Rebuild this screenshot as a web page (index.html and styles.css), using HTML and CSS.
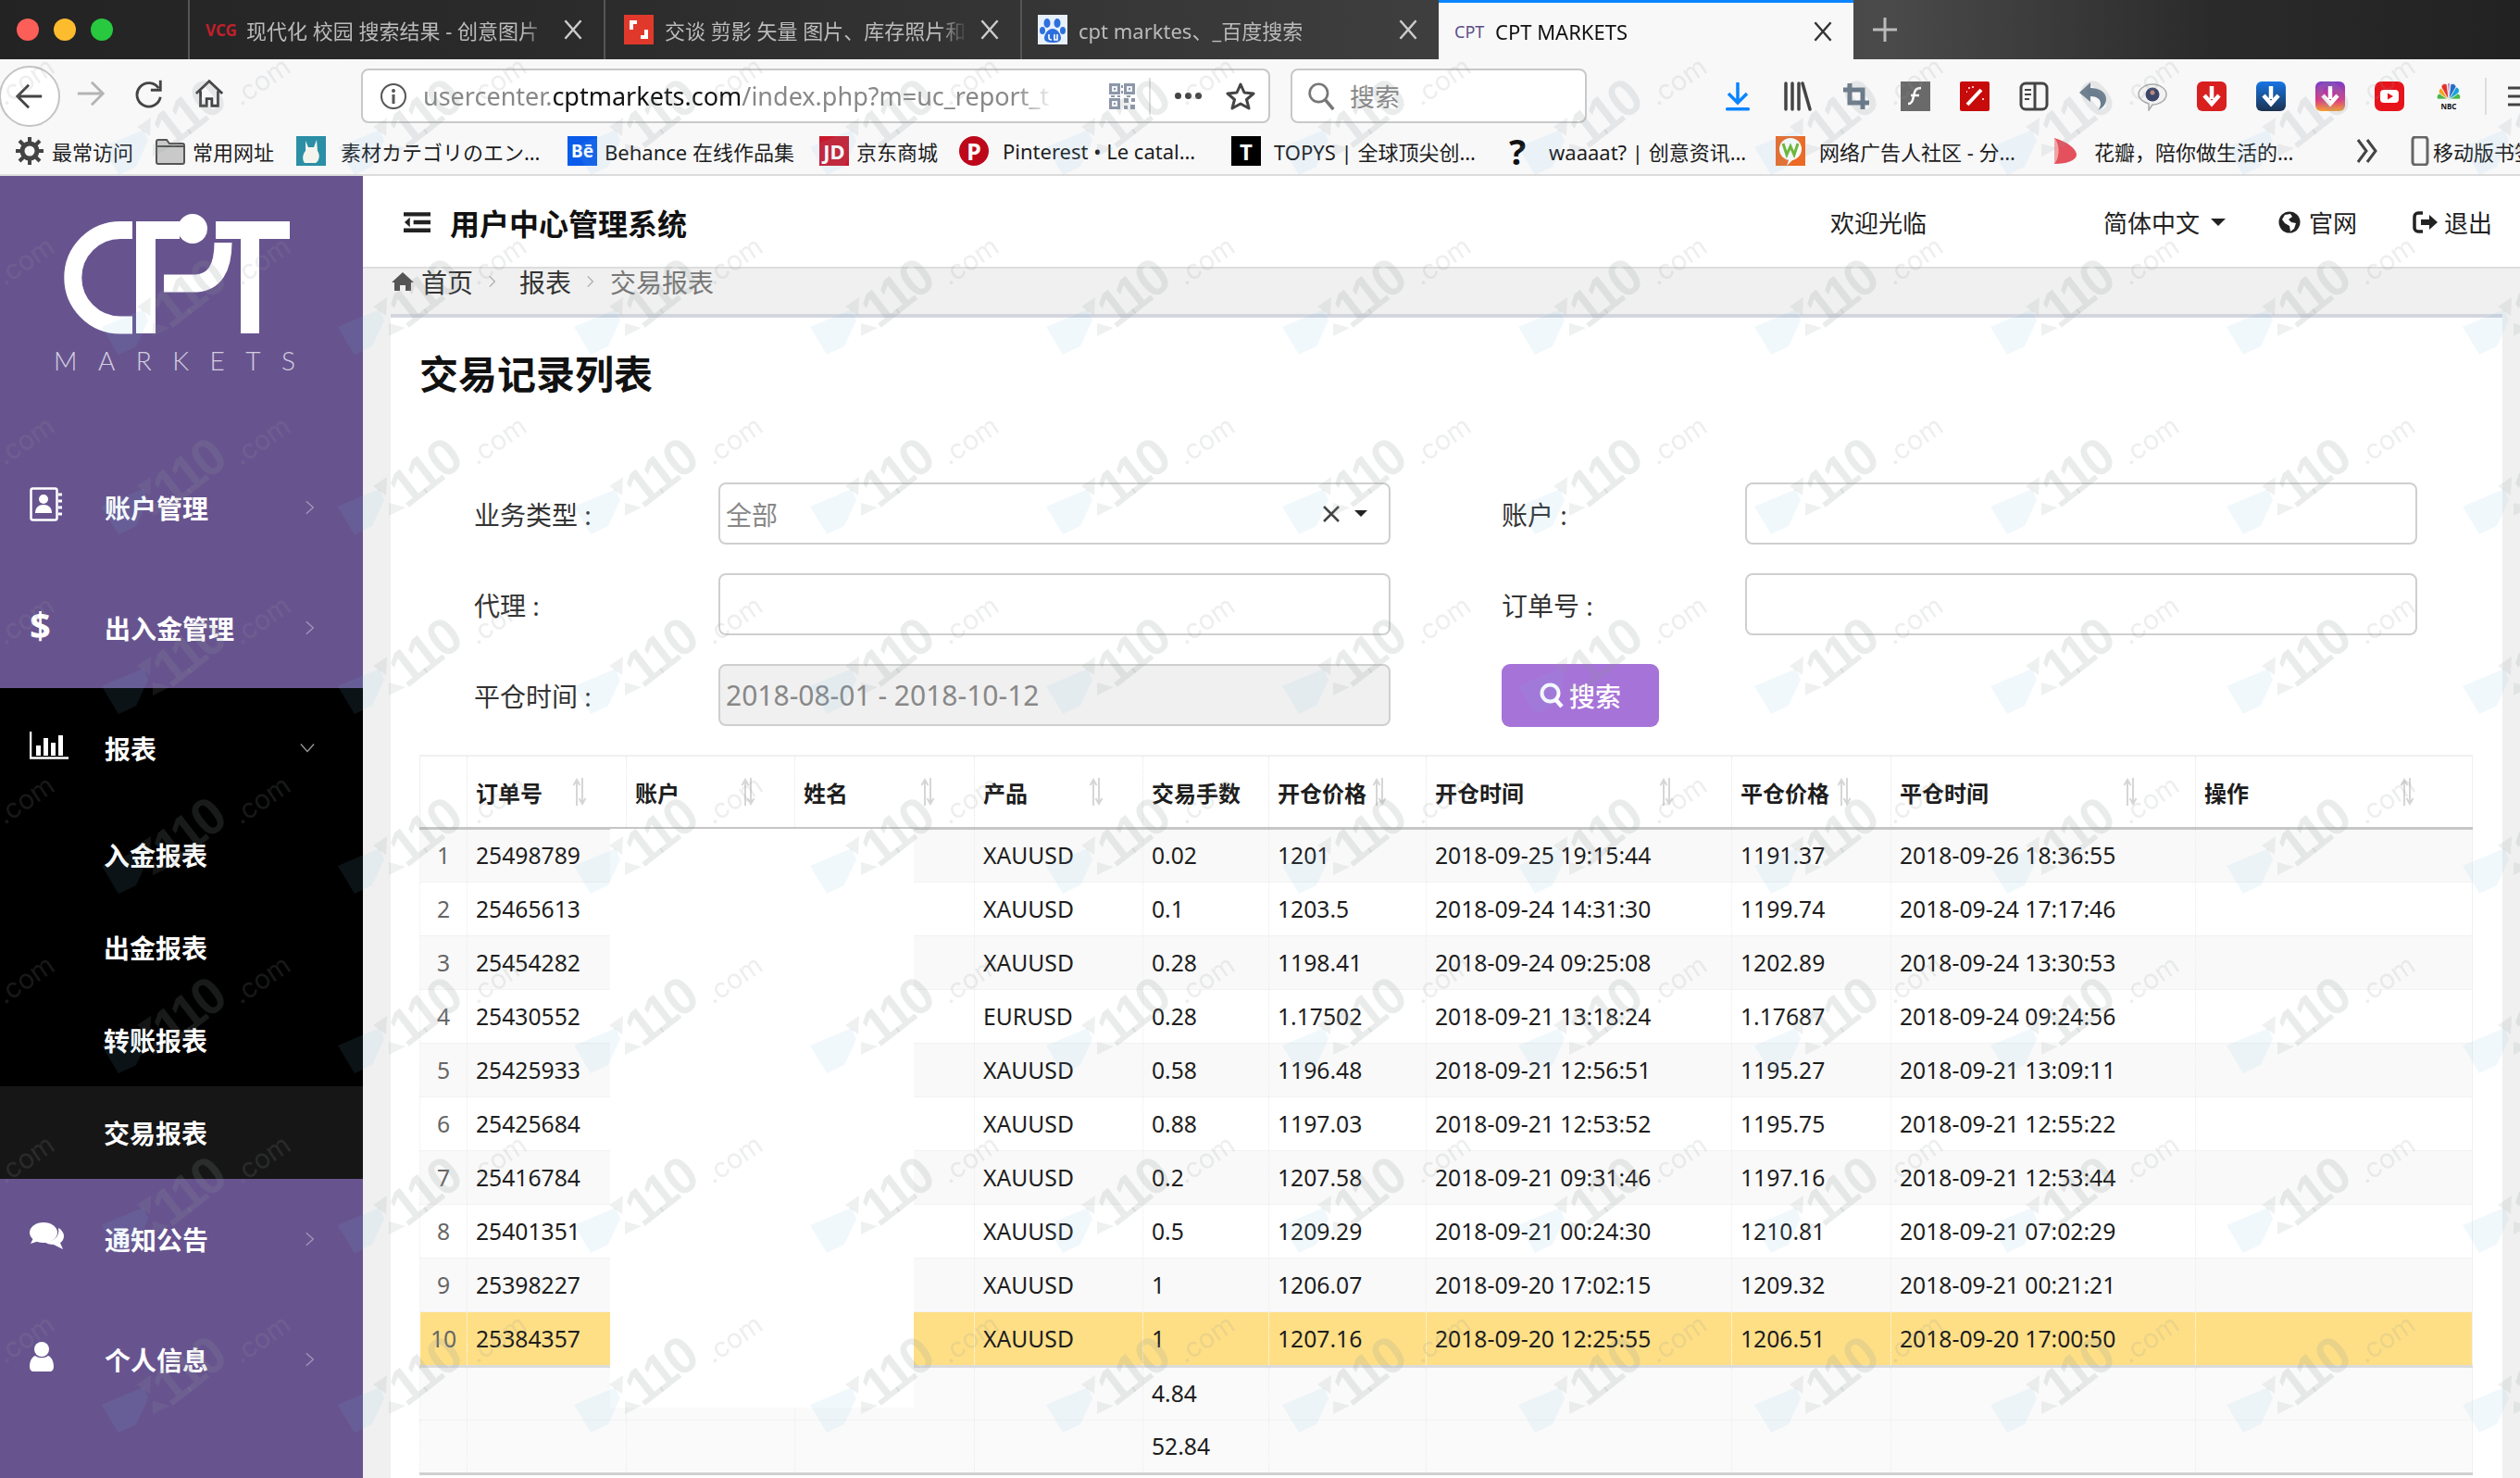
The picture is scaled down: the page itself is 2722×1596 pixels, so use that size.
FILE: index.html
```html
<!DOCTYPE html>
<html lang="zh-CN">
<head>
    <meta charset="UTF-8">
    <title>CPT MARKETS</title>
    <link rel="stylesheet" href="styles.css">
</head>
<body>
    <div class="tabbar">
        <div class="lights"><i class="light red"></i><i class="light yellow"></i><i class="light green"></i></div>
        <div class="tab tab-one">
            <span class="favicon vcg">VCG</span>
            <span class="tab-title">现代化 校园 搜索结果 - 创意图片</span>
            <svg class="tab-close" viewBox="0 0 18 18"><path d="M2 1l14 16M16 1L2 17"/></svg>
        </div>
        <div class="tab">
            <svg class="favicon" viewBox="0 0 32 32"><rect width="32" height="32" fill="#e0392b"/><path d="M8 16V8h6M24 16v8h-6" fill="none" stroke="#fff" stroke-width="4"/></svg>
            <span class="tab-title">交谈 剪影 矢量 图片、库存照片和</span>
            <svg class="tab-close" viewBox="0 0 18 18"><path d="M2 1l14 16M16 1L2 17"/></svg>
        </div>
        <div class="tab tab-three">
            <svg class="favicon" viewBox="0 0 32 32"><rect width="32" height="32" fill="#e8f0fc"/><g fill="#2d6fdc"><ellipse cx="10" cy="9" rx="3.5" ry="5"/><ellipse cx="21" cy="9" rx="3.5" ry="5"/><ellipse cx="5" cy="17" rx="3" ry="4"/><ellipse cx="27" cy="17" rx="3" ry="4"/><path d="M16 15c-5 0-9 6-9 10 0 4 4 5 9 5s9-1 9-5c0-4-4-10-9-10z"/></g><path d="M12 21v4c0 2 2 2 3 2M18 21v6h3v-6" fill="none" stroke="#fff" stroke-width="1.6"/></svg>
            <span class="tab-title">cpt marktes、_百度搜索</span>
            <svg class="tab-close" viewBox="0 0 18 18"><path d="M2 1l14 16M16 1L2 17"/></svg>
        </div>
        <div class="tab tab-active">
            <span class="favicon cpt-mini">CPT</span>
            <span class="tab-title">CPT MARKETS</span>
            <svg class="tab-close" viewBox="0 0 18 18"><path d="M2 1l14 16M16 1L2 17"/></svg>
        </div>
        <svg class="tab-new" viewBox="0 0 28 28"><path d="M14 1v26M1 14h26"/></svg>
    </div>

    <div class="toolbar">
        <div class="back-btn">
            <svg viewBox="0 0 36 36" class="nav-icon"><path d="M32 18H5M17 5L4 18l13 13" stroke="#444"/></svg>
        </div>
        <svg viewBox="0 0 36 36" class="nav-icon forward"><path d="M3 18h27M19 5l13 13-13 13" stroke="#b4b4b4"/></svg>
        <svg viewBox="0 0 36 36" class="nav-icon reload"><path d="M29 12A13.500 13.500 0 1 0 31 22" stroke="#444"/><path d="M31 3v11H20" stroke="#444"/></svg>
        <svg viewBox="0 0 36 36" class="nav-icon home"><path d="M3 18L18 4l15 14M8 15v17h7v-8h6v8h7V15" stroke="#444"/></svg>
        <div class="urlbar">
            <svg class="info-icon" viewBox="0 0 30 30"><circle cx="15" cy="15" r="13" fill="none" stroke="#555" stroke-width="2"/><circle cx="15" cy="9" r="2" fill="#555"/><path d="M15 13v10" stroke="#555" stroke-width="3"/></svg>
            <span class="url-text">usercenter.<b>cptmarkets.com</b>/index.php?m=uc_report_t</span>
            <svg class="qr-icon" viewBox="0 0 30 30"><path d="M1 1h12v12H1zM17 1h12v12H17zM1 17h12v12H1zM17 17h5v5h-5zM24 24h5v5h-5zM17 25h4v4h-4zM25 17h4v4h-4z" fill="#8c97a8"/><path d="M4 4h6v6H4zM20 4h6v6h-6zM4 20h6v6H4z" fill="#f1f2f5"/><path d="M6 6h2v2H6zM22 6h2v2h-2zM6 22h2v2H6zM14 3h2v3h-2zM14 9h2v3h-2zM3 14h4v2H3zM10 14h3v2h-3zM20 14h4v2h-4z" fill="#8c97a8"/></svg>
            <i class="url-sep"></i>
            <span class="url-more"><i></i><i></i><i></i></span>
            <svg class="star-icon" viewBox="0 0 32 32"><path d="M16 3l4 9 10 1-7.500 6.500L25 29l-9-5-9 5 2.500-9.500L2 13l10-1z" fill="none" stroke="#444" stroke-width="3" stroke-linejoin="round"/></svg>
        </div>
        <div class="searchbar">
            <svg class="search-icon" viewBox="0 0 34 36"><circle cx="14" cy="14" r="11" fill="none" stroke="#777" stroke-width="3"/><path d="M22 22l10 12" stroke="#777" stroke-width="4"/></svg>
            <span>搜索</span>
        </div>
        <div class="addons">
            <svg viewBox="0 0 32 32"><path d="M16 1v21M6 13l10 10 10-10" fill="none" stroke="#0a84ff" stroke-width="3.500"/><rect x="3" y="28" width="26" height="3.500" rx="1.500" fill="#0a84ff"/></svg>
            <svg viewBox="0 0 32 32"><path d="M4 2v28M11 2v28M18 2v28M22 2l8 28" fill="none" stroke="#444" stroke-width="3.500" stroke-linecap="round"/></svg>
            <svg viewBox="0 0 32 32"><path d="M9 2v21h21M2 9h21v21" fill="none" stroke="#6b7a8a" stroke-width="5"/></svg>
            <svg viewBox="0 0 32 32"><rect width="32" height="32" fill="#6a6a6a"/><path d="M22 7c-6 0-7 3-8 9-1 5-2 8-6 8M11 15h9" fill="none" stroke="#fff" stroke-width="2.500"/></svg>
            <svg viewBox="0 0 32 32"><rect width="32" height="32" rx="2" fill="#c70a0a"/><path d="M8 25L23 9" stroke="#fff" stroke-width="4"/><path d="M9 7h2M14 5v2M25 18v2M7 11h1" stroke="#fff" stroke-width="1.500"/></svg>
            <svg viewBox="0 0 32 32"><rect x="2" y="2" width="28" height="28" rx="5" fill="none" stroke="#444" stroke-width="3"/><path d="M17 2v28" stroke="#444" stroke-width="3"/><path d="M6 9h7M6 14h7M6 19h5" stroke="#444" stroke-width="2"/></svg>
            <svg viewBox="0 0 32 32"><path d="M13 1L1 12l12 10v-6c7 0 11 3 11 8 0 3-2 6-3 7 5-2 9-7 9-12 0-8-8-12-17-12z" fill="#6b7d8f"/></svg>
            <svg viewBox="0 0 32 32"><path d="M16 3c8 0 15 5 15 11s-7 11-15 11l-4 6v-7C6 22 1 19 1 14 1 8 8 3 16 3z" fill="#f2f2f2" stroke="#aaa" stroke-width="1.500"/><circle cx="16" cy="14" r="7.500" fill="#3d4668"/><circle cx="16" cy="12" r="2.500" fill="#b98a80"/></svg>
            <svg viewBox="0 0 32 32"><rect width="32" height="32" rx="6" fill="#d8201f"/><path d="M16 5v14M8 15l8 9 8-9" fill="none" stroke="#fff" stroke-width="4.500"/></svg>
            <svg viewBox="0 0 32 32"><defs><linearGradient id="bluedl" x1="0" y1="0" x2="0" y2="1"><stop offset="0" stop-color="#1776e6"/><stop offset="1" stop-color="#1b3350"/></linearGradient></defs><rect width="32" height="32" rx="6" fill="url(#bluedl)"/><path d="M16 5v14M8 15l8 9 8-9" fill="none" stroke="#fff" stroke-width="4.500"/></svg>
            <svg viewBox="0 0 32 32"><defs><linearGradient id="instadl" x1="0" y1="0" x2="0" y2="1"><stop offset="0" stop-color="#7a3fc9"/><stop offset=".6" stop-color="#d8358a"/><stop offset="1" stop-color="#f5a030"/></linearGradient></defs><rect width="32" height="32" rx="6" fill="url(#instadl)"/><path d="M16 5v14M8 15l8 9 8-9" fill="none" stroke="#fff" stroke-width="4.500"/></svg>
            <svg viewBox="0 0 32 32"><rect width="32" height="32" rx="7" fill="#e8141c"/><rect x="6" y="9" width="20" height="14" rx="4" fill="#fff"/><path d="M14 12.500v7l6-3.500z" fill="#e8141c"/></svg>
            <svg viewBox="0 0 32 32"><g stroke="#fff" stroke-width=".6"><path d="M16 20L6 13a4 4 0 0 1 2-6z" fill="#f6a21e"/><path d="M16 20L8 6a4 4 0 0 1 6-3z" fill="#e2322b"/><path d="M16 20l-1-18a2 2 0 0 1 2 0z" fill="#8f3d98"/><path d="M16 20l2-17a4 4 0 0 1 6 3z" fill="#2b6cc4"/><path d="M16 20l8-14a4 4 0 0 1 2 7z" fill="#1aa0d8"/><path d="M16 20L26 13a4 4 0 0 1 2 6H4a4 4 0 0 1 2-6z" fill="#4ab84a"/></g><rect x="6" y="21" width="20" height="10" fill="#f8f8f9"/><text x="16" y="30" class="nbc">NBC</text></svg>
            <i class="addon-sep"></i>
            <svg class="addon-menu" viewBox="0 0 20 32"><path d="M4 7h16M4 16h16M4 25h16" stroke="#444" stroke-width="3"/></svg>
        </div>
    </div>

    <div class="bookmarks">
        <a class="bm"><svg class="bm-icon" viewBox="0 0 32 32"><circle cx="16" cy="16" r="8" fill="none" stroke="#444" stroke-width="5"/><path d="M16 1v6M16 25v6M1 16h6M25 16h6M5 5l5 5M22 22l5 5M27 5l-5 5M10 22l-5 5" stroke="#444" stroke-width="4"/></svg>最常访问</a>
        <a class="bm"><svg class="bm-icon" viewBox="0 0 32 32"><path d="M1 6a2 2 0 0 1 2-2h9l3 4h14a2 2 0 0 1 2 2v18a2 2 0 0 1-2 2H3a2 2 0 0 1-2-2z" fill="#c9c9c9" stroke="#555" stroke-width="2"/><path d="M1 11h30" stroke="#555" stroke-width="2"/></svg>常用网址</a>
        <a class="bm"><svg class="bm-icon" viewBox="0 0 32 32"><rect width="32" height="32" fill="#2b8fa6"/><path d="M10 5l3 7h6l3-8 1 12c3 4 2 11-2 13H9c-3-4-2-10 1-13z" fill="#f4f4ee"/></svg>素材カテゴリのエン…</a>
        <a class="bm"><span class="bm-icon logo-be">Bē</span>Behance 在线作品集</a>
        <a class="bm"><span class="bm-icon logo-jd">JD</span>京东商城</a>
        <a class="bm"><span class="bm-icon logo-pin">P</span>Pinterest • Le catal…</a>
        <a class="bm"><span class="bm-icon logo-topys">T</span>TOPYS | 全球顶尖创…</a>
        <a class="bm"><span class="bm-icon logo-what">?</span>waaaat? | 创意资讯…</a>
        <a class="bm"><svg class="bm-icon" viewBox="0 0 32 32"><rect width="32" height="32" fill="#ec6a25"/><circle cx="16" cy="14" r="12" fill="#fff"/><path d="M12 32l3-9h6z" fill="#fff"/><path d="M8 8l4 12 4-9 4 9 4-12" fill="none" stroke="#6db72b" stroke-width="3"/></svg>网络广告人社区 - 分…</a>
        <a class="bm"><svg class="bm-icon" viewBox="0 0 32 32"><path d="M3 2c14 4 24 12 24 18 0 6-10 10-24 10z" fill="#e4505c"/><path d="M3 2c5 4 7 20 0 28z" fill="#f1a5a8"/></svg>花瓣，陪你做生活的…</a>
        <svg class="bm-more" viewBox="0 0 26 30"><path d="M3 3l9 12-9 12M13 3l9 12-9 12" fill="none" stroke="#444" stroke-width="3"/></svg>
        <a class="bm bm-mobile"><svg class="bm-icon" viewBox="0 0 20 32"><rect x="2" y="1" width="16" height="30" rx="3" fill="none" stroke="#666" stroke-width="3"/></svg>移动版书签</a>
    </div>

    <div class="app">
        <aside class="sidebar">
            <div class="logo">
                <svg viewBox="0 0 392 293" width="392" height="293">
                    <path d="M143 58.500H130A51 51 0 0 0 130 161H143" fill="none" stroke="#fff" stroke-width="19"/>
                    <path d="M147 49h47v19h-26v102h-21z" fill="#fff"/>
                    <circle cx="208" cy="57" r="16" fill="#fff"/>
                    <path d="M177 116H212Q241 114 241 72" fill="none" stroke="#fff" stroke-width="19"/>
                    <path d="M233 49h80v19h-33v102h-20V68h-27z" fill="#fff"/>
                    <text x="58" y="210" class="logo-word">MARKETS</text>
                </svg>
            </div>
            <nav>
                <a class="menu-item">
                    <span class="menu-icon"><svg width="36" height="38" viewBox="0 0 36 38"><rect x="1.500" y="1.500" width="28" height="34" rx="2" fill="none" stroke="#fff" stroke-width="2.500"/><circle cx="15" cy="13" r="5" fill="#fff"/><path d="M6 28c0-6 4-9 9-9s9 3 9 9z" fill="#fff"/><path d="M31 8h4M31 15h4M31 22h4M31 29h4" stroke="#fff" stroke-width="3"/></svg></span>
                    账户管理
                    <svg class="chev" viewBox="0 0 12 18"><path d="M1 1l9 8-9 8"/></svg>
                </a>
                <a class="menu-item">
                    <span class="menu-icon dollar">$</span>
                    出入金管理
                    <svg class="chev" viewBox="0 0 12 18"><path d="M1 1l9 8-9 8"/></svg>
                </a>
                <a class="menu-item menu-open">
                    <span class="menu-icon"><svg width="42" height="30" viewBox="0 0 42 30"><path d="M1 0v28.500h41" fill="none" stroke="#fff" stroke-width="2.500"/><path d="M7 15h5v11H7zM15 7h5v19h-5zM23 12h5v14h-5zM31 4h5v22h-5z" fill="#fff"/></svg></span>
                    报表
                    <svg class="chev chev-down" viewBox="0 0 18 12"><path d="M1 1l8 9 8-9"/></svg>
                </a>
                <a class="sub-item">入金报表</a>
                <a class="sub-item">出金报表</a>
                <a class="sub-item">转账报表</a>
                <a class="sub-item sub-active">交易报表</a>
                <a class="menu-item">
                    <span class="menu-icon"><svg width="38" height="30" viewBox="0 0 38 30"><ellipse cx="15" cy="11" rx="15" ry="11" fill="#fff"/><path d="M4 17l-3 6 9-3z" fill="#fff"/><path d="M31 6c4 2 6 6 6 9 0 3-2 6-4 7l3 7-10-5c-4 0-8-1-10-3 9 0 17-5 15-15z" fill="#fff"/></svg></span>
                    通知公告
                    <svg class="chev" viewBox="0 0 12 18"><path d="M1 1l9 8-9 8"/></svg>
                </a>
                <a class="menu-item">
                    <span class="menu-icon"><svg width="26" height="32" viewBox="0 0 26 32"><circle cx="13" cy="8" r="8" fill="#fff"/><path d="M0 27c0-7 3-11 6-12 4 3 10 3 14 0 3 1 6 5 6 12 0 3-2 5-4 5H4c-2 0-4-2-4-5z" fill="#fff"/></svg></span>
                    个人信息
                    <svg class="chev" viewBox="0 0 12 18"><path d="M1 1l9 8-9 8"/></svg>
                </a>
            </nav>
        </aside>

        <main class="main">
            <header class="topbar">
                <svg class="toggle" viewBox="0 0 30 22"><path d="M0 2h30M11 11h19M0 20h30" stroke="#222" stroke-width="4.500"/><path d="M7 5.500v11l-6-5.500z" fill="#222"/></svg>
                <h1 class="app-title">用户中心管理系统</h1>
                <span class="welcome">欢迎光临</span>
                <span class="top-link lang">简体中文<i class="caret"></i></span>
                <span class="top-link site"><svg viewBox="0 0 24 24"><circle cx="12" cy="12" r="11.500" fill="#222"/><path d="M7 4l6-1 2 3-4 3 3 3 5 1-2 6-4 3-1-6-5-3-3-4z" fill="#fff"/></svg>官网</span>
                <span class="top-link logout"><svg viewBox="0 0 28 24"><path d="M11 2H6a4 4 0 0 0-4 4v12a4 4 0 0 0 4 4h5" fill="none" stroke="#222" stroke-width="3.500"/><path d="M9 9h9V4l9 8-9 8v-5H9z" fill="#222"/></svg>退出</span>
            </header>
            <div class="crumbs">
                <svg class="crumb-home" viewBox="0 0 24 20"><path d="M12 0l12 11h-3v9h-6v-6H9v6H3v-9H0z" fill="#555"/></svg>
                <span class="crumb">首页</span>
                <svg class="crumb-sep crumb-sep-first" viewBox="0 0 10 16"><path d="M1 1l7 7-7 7"/></svg>
                <span class="crumb">报表</span>
                <svg class="crumb-sep" viewBox="0 0 10 16"><path d="M1 1l7 7-7 7"/></svg>
                <span class="crumb crumb-now">交易报表</span>
            </div>

            <section class="panel">
                <h2 class="panel-title">交易记录列表</h2>
                <form class="filter">
                    <label>业务类型 :</label>
                    <div class="field">
                        全部
                        <svg class="field-clear" viewBox="0 0 20 20"><path d="M2 2l16 16M18 2L2 18"/></svg>
                        <i class="caret"></i>
                    </div>
                    <label>账户 :</label>
                    <div class="field"></div>

                    <label>代理 :</label>
                    <div class="field"></div>
                    <label>订单号 :</label>
                    <div class="field"></div>

                    <label>平仓时间 :</label>
                    <div class="field field-off">2018-08-01 - 2018-10-12</div>
                    <button class="btn-search" type="button">
                        <svg viewBox="0 0 26 28"><circle cx="11.500" cy="11.500" r="9" fill="none" stroke="#fff" stroke-width="4"/><path d="M17 18l7 8" stroke="#fff" stroke-width="4.500"/></svg>
                        搜索
                    </button>
                </form>

                <div class="table-wrap">
                    <table class="data-table">
                        <colgroup>
                            <col class="c-no"><col class="c-order"><col class="c-acc"><col class="c-name"><col class="c-prod"><col class="c-lots"><col class="c-open"><col class="c-otime"><col class="c-close"><col class="c-ctime"><col class="c-op">
                        </colgroup>
                        <thead>
                            <tr>
                                <th></th>
                                <th><div class="th-in">订单号<svg class="sort" viewBox="0 0 16 30"><path d="M5 30V3M1.500 8L5 2l3.500 6M11 0v27M7.500 22l3.500 6 3.500-6"/></svg></div></th>
                                <th><div class="th-in">账户<svg class="sort" viewBox="0 0 16 30"><path d="M5 30V3M1.500 8L5 2l3.500 6M11 0v27M7.500 22l3.500 6 3.500-6"/></svg></div></th>
                                <th><div class="th-in">姓名<svg class="sort" viewBox="0 0 16 30"><path d="M5 30V3M1.500 8L5 2l3.500 6M11 0v27M7.500 22l3.500 6 3.500-6"/></svg></div></th>
                                <th><div class="th-in">产品<svg class="sort" viewBox="0 0 16 30"><path d="M5 30V3M1.500 8L5 2l3.500 6M11 0v27M7.500 22l3.500 6 3.500-6"/></svg></div></th>
                                <th><div class="th-in">交易手数</div></th>
                                <th><div class="th-in">开仓价格<svg class="sort" viewBox="0 0 16 30"><path d="M5 30V3M1.500 8L5 2l3.500 6M11 0v27M7.500 22l3.500 6 3.500-6"/></svg></div></th>
                                <th class="th-wide"><div class="th-in">开仓时间<svg class="sort" viewBox="0 0 16 30"><path d="M5 30V3M1.500 8L5 2l3.500 6M11 0v27M7.500 22l3.500 6 3.500-6"/></svg></div></th>
                                <th><div class="th-in">平仓价格<svg class="sort" viewBox="0 0 16 30"><path d="M5 30V3M1.500 8L5 2l3.500 6M11 0v27M7.500 22l3.500 6 3.500-6"/></svg></div></th>
                                <th class="th-wide"><div class="th-in">平仓时间<svg class="sort" viewBox="0 0 16 30"><path d="M5 30V3M1.500 8L5 2l3.500 6M11 0v27M7.500 22l3.500 6 3.500-6"/></svg></div></th>
                                <th class="th-wide"><div class="th-in">操作<svg class="sort" viewBox="0 0 16 30"><path d="M5 30V3M1.500 8L5 2l3.500 6M11 0v27M7.500 22l3.500 6 3.500-6"/></svg></div></th>
                            </tr>
                        </thead>
                        <tbody>
                            <tr><td class="idx">1</td><td>25498789</td><td></td><td></td><td>XAUUSD</td><td>0.02</td><td>1201</td><td>2018-09-25 19:15:44</td><td>1191.37</td><td>2018-09-26 18:36:55</td><td></td></tr>
                            <tr><td class="idx">2</td><td>25465613</td><td></td><td></td><td>XAUUSD</td><td>0.1</td><td>1203.5</td><td>2018-09-24 14:31:30</td><td>1199.74</td><td>2018-09-24 17:17:46</td><td></td></tr>
                            <tr><td class="idx">3</td><td>25454282</td><td></td><td></td><td>XAUUSD</td><td>0.28</td><td>1198.41</td><td>2018-09-24 09:25:08</td><td>1202.89</td><td>2018-09-24 13:30:53</td><td></td></tr>
                            <tr><td class="idx">4</td><td>25430552</td><td></td><td></td><td>EURUSD</td><td>0.28</td><td>1.17502</td><td>2018-09-21 13:18:24</td><td>1.17687</td><td>2018-09-24 09:24:56</td><td></td></tr>
                            <tr><td class="idx">5</td><td>25425933</td><td></td><td></td><td>XAUUSD</td><td>0.58</td><td>1196.48</td><td>2018-09-21 12:56:51</td><td>1195.27</td><td>2018-09-21 13:09:11</td><td></td></tr>
                            <tr><td class="idx">6</td><td>25425684</td><td></td><td></td><td>XAUUSD</td><td>0.88</td><td>1197.03</td><td>2018-09-21 12:53:52</td><td>1195.75</td><td>2018-09-21 12:55:22</td><td></td></tr>
                            <tr><td class="idx">7</td><td>25416784</td><td></td><td></td><td>XAUUSD</td><td>0.2</td><td>1207.58</td><td>2018-09-21 09:31:46</td><td>1197.16</td><td>2018-09-21 12:53:44</td><td></td></tr>
                            <tr><td class="idx">8</td><td>25401351</td><td></td><td></td><td>XAUUSD</td><td>0.5</td><td>1209.29</td><td>2018-09-21 00:24:30</td><td>1210.81</td><td>2018-09-21 07:02:29</td><td></td></tr>
                            <tr><td class="idx">9</td><td>25398227</td><td></td><td></td><td>XAUUSD</td><td>1</td><td>1206.07</td><td>2018-09-20 17:02:15</td><td>1209.32</td><td>2018-09-21 00:21:21</td><td></td></tr>
                            <tr class="row-hit"><td class="idx">10</td><td>25384357</td><td></td><td></td><td>XAUUSD</td><td>1</td><td>1207.16</td><td>2018-09-20 12:25:55</td><td>1206.51</td><td>2018-09-20 17:00:50</td><td></td></tr>
                        </tbody>
                        <tfoot>
                            <tr><td></td><td></td><td></td><td></td><td></td><td>4.84</td><td></td><td></td><td></td><td></td><td></td></tr>
                            <tr><td></td><td></td><td></td><td></td><td></td><td>52.84</td><td></td><td></td><td></td><td></td><td></td></tr>
                        </tfoot>
                    </table>
                    <div class="blank-out"></div>
                </div>
            </section>
        </main>
    </div>

    <!-- site watermark, repeated over everything under the tabs -->
    <svg class="watermark" width="2722" height="1596">
        <defs>
            <pattern id="wm" patternUnits="userSpaceOnUse" x="100" y="62" width="255" height="194">
                <path d="M10 97L55 78 60 90 47 118 28 127z" fill="#78bee6" fill-opacity=".1"/>
                <path d="M48 75L63 65 62 85zM65 93L83 98 65 107z" fill="#8c9696" fill-opacity=".14"/>
                <text transform="translate(84 100) rotate(-38)" class="wm-num">110</text>
                <text transform="translate(160 53) rotate(-34)" class="wm-dom">.com</text>
            </pattern>
        </defs>
        <rect y="64" width="2722" height="1532" fill="url(#wm)"/>
    </svg>
</body>
</html>
```

FILE: styles.css
```css
* {
    box-sizing: border-box;
}
html, body {
    margin: 0;
    padding: 0;
}
body {
    position: relative;
    width: 2722px;
    height: 1596px;
    overflow: hidden;
    background-color: #f8f8f9;
    color: #222;
    font-family: "Noto Sans", "Noto Sans CJK SC", sans-serif;
}
svg {
    display: block;
    flex: none;
}

/* browser tabs */
.tabbar {
    display: flex;
    align-items: stretch;
    height: 64px;
    background: linear-gradient(90deg, #232323 0, #2c2c2c 25%, #3a3a3a 50%, #4a4a4a 75%, #2a2a2a 88%, #222 100%);
}
.lights {
    display: flex;
    align-items: center;
    gap: 16px;
    width: 203px;
    padding-left: 18px;
}
.light {
    width: 24px;
    height: 24px;
    border-radius: 50%;
}
.red { background-color: #fc5f57; }
.yellow { background-color: #fdbc2e; }
.green { background-color: #28c83f; }
.tab {
    display: flex;
    align-items: center;
    width: 450px;
    padding: 0 22px 0 20px;
    border-left: 2px solid #555;
    font-size: 22px;
    color: #bbb;
}
.tab-one { width: 449px; padding-left: 17px; }
.tab-three { width: 452px; padding-left: 17px; }
.tab-active {
    width: 448px;
    padding-left: 17px;
    border-left: 0;
    border-top: 3px solid #0a84ff;
    background-color: #f8f8f9;
    color: #111;
}
.favicon {
    width: 32px;
    height: 32px;
    flex: none;
}
.vcg {
    display: flex;
    align-items: center;
    width: 32px;
    font-size: 17px;
    font-weight: 700;
    color: #c0202c;
    white-space: nowrap;
}
.cpt-mini {
    display: flex;
    align-items: center;
    font-size: 18px;
    color: #5d4e86;
}
.tab-title {
    flex: 1;
    margin-left: 12px;
    overflow: hidden;
    white-space: nowrap;
    -webkit-mask-image: linear-gradient(90deg, #000 90%, transparent 100%);
    mask-image: linear-gradient(90deg, #000 90%, transparent 100%);
}
.tab-close {
    width: 22px;
    height: 22px;
    margin-left: 12px;
    stroke: #ccc;
    stroke-width: 2;
}
.tab-active .tab-close { stroke: #333; }
.tab-new {
    width: 28px;
    height: 28px;
    margin: 18px 0 0 20px;
    stroke: #bbb;
    stroke-width: 3;
}

/* browser toolbar */
.toolbar {
    display: flex;
    align-items: center;
    height: 74px;
    background-color: #f8f8f9;
}
.back-btn {
    display: flex;
    align-items: center;
    justify-content: center;
    flex: none;
    width: 66px;
    height: 66px;
    margin: 6px 0 0 -1px;
    border: 2px solid #c4c4c4;
    border-radius: 50%;
    background-color: #fff;
}
.nav-icon {
    width: 34px;
    height: 34px;
    fill: none;
    stroke-width: 3;
}
.forward { margin-left: 16px; }
.reload { margin-left: 29px; }
.home { margin-left: 31px; }
.urlbar {
    display: flex;
    align-items: center;
    flex: none;
    width: 982px;
    height: 59px;
    margin: 5px 0 0 147px;
    padding: 0 14px 0 18px;
    border: 2px solid #c8c8c8;
    border-radius: 8px;
    background-color: #fff;
}
.info-icon {
    width: 30px;
    height: 30px;
}
.url-text {
    width: 700px;
    margin-left: 17px;
    overflow: hidden;
    white-space: nowrap;
    font-size: 27px;
    color: #888;
    -webkit-mask-image: linear-gradient(90deg, #000 94%, transparent 100%);
    mask-image: linear-gradient(90deg, #000 94%, transparent 100%);
}
.url-text b {
    font-weight: 400;
    color: #111;
}
.qr-icon {
    width: 30px;
    height: 30px;
    margin-left: 58px;
}
.url-sep {
    width: 2px;
    height: 40px;
    margin-left: 14px;
    background-color: #ddd;
}
.url-more {
    display: flex;
    gap: 4px;
    margin-left: 26px;
}
.url-more i {
    width: 7px;
    height: 7px;
    border-radius: 50%;
    background-color: #444;
}
.star-icon {
    width: 32px;
    height: 32px;
    margin-left: 26px;
}
.searchbar {
    display: flex;
    align-items: center;
    flex: none;
    width: 320px;
    height: 59px;
    margin: 5px 0 0 22px;
    padding-left: 16px;
    border: 2px solid #c8c8c8;
    border-radius: 8px;
    background-color: #fff;
    font-size: 27px;
    color: #888;
}
.search-icon {
    width: 30px;
    height: 34px;
    margin-right: 16px;
}
.addons {
    display: flex;
    align-items: center;
    flex: none;
    gap: 32px;
    margin: 5px 0 0 147px;
}
.addons svg {
    width: 32px;
    height: 32px;
}
.nbc {
    font-size: 8px;
    font-weight: 700;
    text-anchor: middle;
    fill: #111;
}
.addon-sep {
    flex: none;
    width: 2px;
    height: 40px;
    margin-left: -9px;
    background-color: #ddd;
}
.addons .addon-menu {
    width: 20px;
    margin-left: -13px;
}

/* bookmarks */
.bookmarks {
    display: flex;
    align-items: center;
    height: 52px;
    padding-left: 16px;
    background-color: #f8f8f9;
    border-bottom: 2px solid #dcdcdc;
    white-space: nowrap;
}
.bm {
    display: flex;
    align-items: center;
    flex: none;
    gap: 8px;
    width: 152px;
    font-size: 22px;
    color: #1c1c1c;
}
.bm:nth-child(3) { width: 293px; gap: 16px; }
.bm:nth-child(4) { width: 272px; }
.bm:nth-child(5) { width: 151px; }
.bm:nth-child(6) { width: 294px; gap: 15px; }
.bm:nth-child(7) { width: 293px; gap: 14px; }
.bm:nth-child(8) { width: 295px; gap: 18px; }
.bm:nth-child(9) { width: 298px; gap: 15px; }
.bm:nth-child(10) { width: 328px; gap: 14px; }
.bm-icon {
    display: flex;
    align-items: center;
    justify-content: center;
    flex: none;
    width: 32px;
    height: 32px;
}
.logo-be {
    background-color: #0a5bea;
    font-size: 19px;
    font-weight: 700;
    color: #fff;
}
.logo-jd {
    background-color: #c9182c;
    font-size: 22px;
    font-weight: 700;
    color: #fff;
}
.logo-pin {
    border-radius: 50%;
    background-color: #bd081c;
    font-size: 25px;
    font-weight: 700;
    color: #fff;
}
.logo-topys {
    background-color: #000;
    font-size: 24px;
    font-weight: 700;
    color: #fff;
}
.logo-what {
    font-size: 38px;
    font-weight: 700;
    color: #111;
}
.bm-more {
    width: 26px;
    height: 30px;
    margin-right: 34px;
}
.bm-mobile .bm-icon { width: 20px; }
.bm-mobile { gap: 4px; }

/* app layout */
.app {
    display: flex;
    height: 1406px;
}
.sidebar {
    flex: none;
    width: 392px;
    background-color: #67548f;
    color: #fff;
}
.logo {
    height: 293px;
}
.logo-word {
    font-family: "Lato", "Noto Sans", sans-serif;
    font-size: 28px;
    font-weight: 300;
    letter-spacing: 22.500px;
    fill: rgba(255, 255, 255, .72);
}
.menu-item {
    display: flex;
    align-items: center;
    height: 130px;
    padding: 0 52px 0 32px;
    font-size: 28px;
    font-weight: 700;
}
.menu-open {
    background-color: #000;
}
.menu-icon {
    display: flex;
    flex: none;
    align-items: center;
    width: 81px;
    margin-top: -6px;
}
.dollar {
    font-size: 40px;
    font-weight: 700;
    line-height: 40px;
}
.chev {
    width: 10px;
    height: 18px;
    margin-left: auto;
    fill: none;
    stroke: rgba(255, 255, 255, .4);
    stroke-width: 1.5;
}
.chev-down {
    width: 16px;
    height: 12px;
    stroke: rgba(255, 255, 255, .6);
}
.sub-item {
    display: flex;
    align-items: center;
    height: 100px;
    padding-left: 112px;
    background-color: #000;
    font-size: 28px;
    font-weight: 700;
}
.sub-active {
    background-color: #161616;
}

/* top bar */
.main {
    flex: 1;
    min-width: 0;
    background-color: #f0f0f0;
}
.topbar {
    display: flex;
    align-items: center;
    height: 100px;
    padding: 2px 0 0 44px;
    background-color: #fff;
    border-bottom: 2px solid #ddd;
}
.toggle {
    width: 29px;
    height: 22px;
}
.app-title {
    margin: 0 0 0 21px;
    font-size: 32px;
    font-weight: 700;
    color: #111;
}
.welcome {
    margin-left: auto;
    font-size: 26px;
}
.top-link {
    display: flex;
    align-items: center;
    font-size: 26px;
}
.lang { margin-left: 191px; }
.site { margin-left: 57px; }
.logout { margin: 0 30px 0 60px; }
.site svg {
    width: 24px;
    height: 24px;
    margin-right: 9px;
}
.logout svg {
    width: 28px;
    height: 24px;
    margin-right: 6px;
}
.caret {
    width: 0;
    height: 0;
    border-style: solid;
    border-width: 8px 8px 0;
    border-color: #222 transparent transparent;
}
.lang .caret { margin-left: 12px; }

/* breadcrumbs */
.crumbs {
    display: flex;
    align-items: center;
    height: 49px;
    margin-left: 31px;
    padding-bottom: 21px;
    font-size: 28px;
    color: #333;
}
.crumb-home {
    width: 24px;
    height: 20px;
    margin-right: 8px;
}
.crumb-now {
    color: #777;
}
.crumb-sep {
    width: 8px;
    height: 14px;
    margin: 0 17px;
    fill: none;
    stroke: #aaa;
    stroke-width: 1.5;
}
.crumb-sep-first {
    margin-right: 25px;
}

/* content panel */
.panel {
    height: 1257px;
    margin: 0 19px 0 30px;
    padding-left: 31px;
    overflow: hidden;
    border-top: 4px solid #d3d6df;
    background-color: #fff;
}
.panel-title {
    height: 58px;
    margin: 32px 0 88px;
    font-size: 42px;
    line-height: 58px;
    font-weight: 700;
    color: #111;
}
.filter {
    display: grid;
    grid-template-columns: 264px 726px 120px 263px 726px;
    grid-auto-rows: 67px;
    row-gap: 31px;
    padding-left: 59px;
    font-size: 28px;
    color: #333;
}
.filter label {
    display: flex;
    align-items: center;
}
.filter > :nth-child(4n+3) {
    grid-column: 4;
}
.field {
    display: flex;
    align-items: center;
    padding-left: 6px;
    border: 2px solid #cfcfcf;
    border-radius: 8px;
    color: #888;
}
.field-off {
    background-color: #f0f0f0;
    font-size: 30px;
}
.field-clear {
    width: 20px;
    height: 20px;
    margin-left: auto;
    stroke: #444;
    stroke-width: 2.5;
}
.field .caret {
    margin: 0 23px 0 15px;
    border-width: 7px 7px 0;
}
.btn-search {
    display: flex;
    align-items: center;
    justify-content: center;
    gap: 6px;
    width: 170px;
    height: 68px;
    padding: 0;
    border: 0;
    border-radius: 9px;
    background-color: #a673d8;
    font-family: inherit;
    font-size: 28px;
    font-weight: 500;
    color: #fff;
}
.btn-search svg {
    width: 26px;
    height: 28px;
}

/* table */
.table-wrap {
    position: relative;
    width: 2217px;
    margin-top: 31px;
}
.data-table {
    width: 2217px;
    table-layout: fixed;
    border-collapse: collapse;
    border-top: 2px solid #f0f0f0;
    font-size: 24.700px;
    color: #1d1d1d;
}
.c-no { width: 51px; }
.c-order { width: 172px; }
.c-acc { width: 182px; }
.c-name { width: 194px; }
.c-prod { width: 182px; }
.c-lots { width: 136px; }
.c-open { width: 170px; }
.c-otime { width: 330px; }
.c-close { width: 172px; }
.c-ctime { width: 329px; }
.c-op { width: 299px; }
.data-table th {
    height: 78px;
    padding: 1px 42px 0 9px;
    border-left: 1px dotted #e6e6e6;
    border-bottom: 3px solid #c6c6c6;
    font-size: 24px;
    font-weight: 700;
    text-align: left;
}
.data-table .th-wide {
    padding-right: 62px;
}
.data-table th:first-child {
    border-left: 1px solid #f0f0f0;
}
.data-table th:last-child {
    border-right: 1px solid #f0f0f0;
}
.th-in {
    display: flex;
    align-items: center;
    justify-content: space-between;
    white-space: nowrap;
}
.sort {
    width: 16px;
    height: 30px;
    fill: none;
    stroke: #d6d6d6;
    stroke-width: 2;
}
.data-table td {
    height: 58px;
    padding: 0 0 0 9px;
    border-left: 1px dotted #ececec;
    border-bottom: 1px solid #f2f2f2;
    white-space: nowrap;
}
.data-table td:last-child {
    border-right: 1px solid #f0f0f0;
}
.data-table tbody tr:nth-child(odd) {
    background-color: #f9f9f9;
}
.data-table td.idx {
    padding: 0;
    text-align: center;
    color: #666;
}
.data-table tbody .row-hit,
.data-table tbody .row-hit:nth-child(odd) {
    background-color: #fedf86;
}
.data-table .row-hit td {
    height: 59px;
    border-left-color: #fff;
    border-bottom: 3px solid #dcdcdc;
}
.data-table tfoot tr {
    background-color: #fafafa;
}
.data-table tfoot tr:last-child td {
    border-bottom: 3px solid #d0d0d0;
}

/* white block hiding the account and name columns */
.blank-out {
    position: absolute;
    left: 206px;
    top: 80px;
    width: 328px;
    height: 625px;
    background-color: #fff;
}

/* watermark */
.watermark {
    position: absolute;
    left: 0;
    top: 0;
    pointer-events: none;
}
.wm-num {
    font-family: "Liberation Sans", sans-serif;
    font-size: 56px;
    font-weight: 700;
    letter-spacing: -4px;
    fill: rgba(140, 150, 150, .18);
}
.wm-dom {
    font-family: "Inter", "Liberation Sans", sans-serif;
    font-size: 29px;
    fill: rgba(140, 150, 150, .16);
}
```
